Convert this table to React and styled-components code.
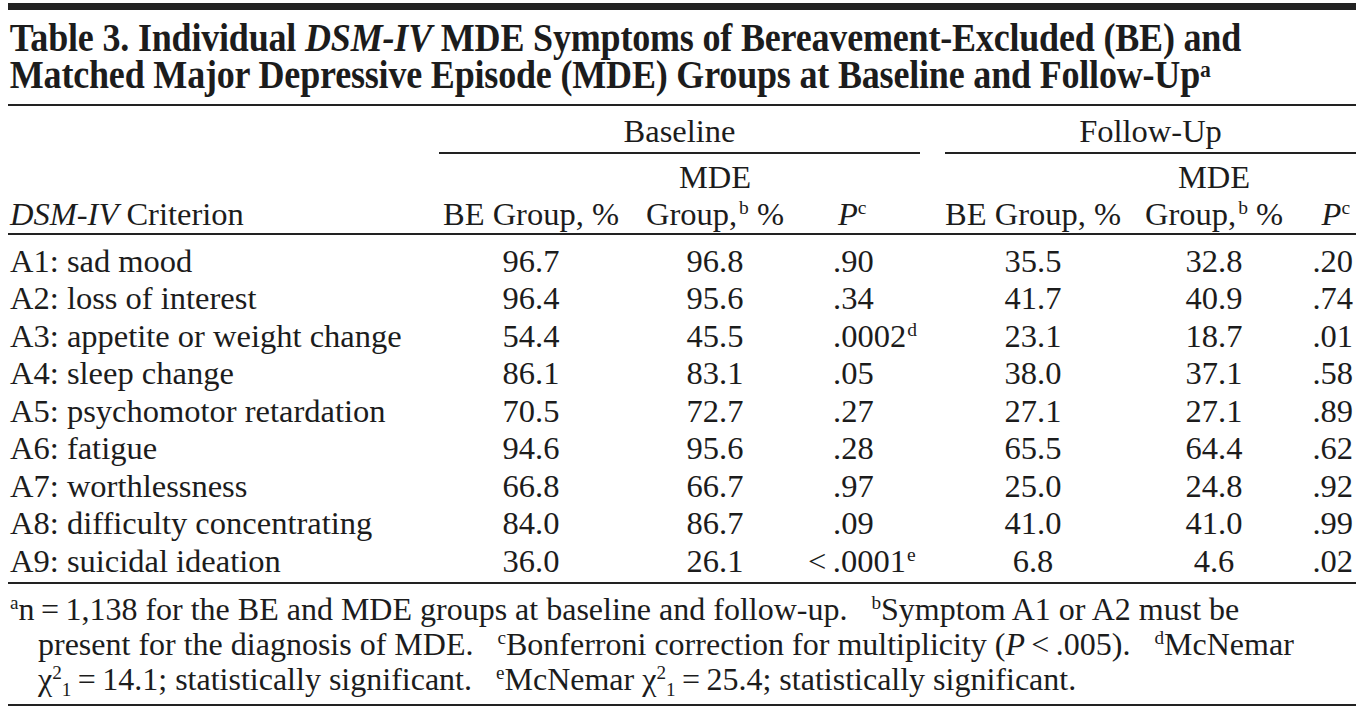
import React from 'react';
import styled, { createGlobalStyle } from 'styled-components';

const SERIF = '"Liberation Serif", "Times New Roman", Times, serif';

const GlobalStyle = createGlobalStyle`
  html, body {
    margin: 0;
    padding: 0;
    background: #ffffff;
  }
  body {
    font-family: ${SERIF};
    color: #1c1c1c;
  }
`;

const Page = styled.div`
  width: 1348px;
  padding: 3px 0 0 8px;
  font-family: ${SERIF};
`;

const TopBar = styled.div`
  height: 7px;
  background: #222;
`;

const Title = styled.h1`
  margin: 0;
  padding: 9px 0 11px 2px;
  font-family: ${SERIF};
  font-size: 40px;
  line-height: 37px;
  font-weight: 700;
  letter-spacing: -0.2px;
  transform: scaleX(0.9);
  transform-origin: left center;
  white-space: nowrap;
  width: 1480px;
`;

const Rule = styled.div`
  height: ${(p) => p.$h || 2}px;
  background: #222;
`;

const Table = styled.table`
  width: 1348px;
  border-collapse: collapse;
  table-layout: fixed;
  font-family: ${SERIF};
  font-size: 32.5px;
  line-height: 37px;
  color: #1c1c1c;
`;

const GroupHead = styled.th`
  font-weight: 400;
  text-align: center;
  padding: 7px 0 2px;
  line-height: 37px;
  border-bottom: ${(p) => (p.$ruled ? '2px solid #222' : 'none')};
`;

const HeadCell = styled.th`
  font-weight: 400;
  text-align: ${(p) => p.$align || 'center'};
  vertical-align: bottom;
  padding: 5px 0 0;
  padding-left: ${(p) => p.$pl || 0}px;
  padding-right: ${(p) => p.$pr || 0}px;
  line-height: 37px;
  border-bottom: 2px solid #222;
  white-space: nowrap;
`;

const Row = styled.tr`
  height: ${(p) => p.$h}px;
`;

const Cell = styled.td`
  text-align: ${(p) => p.$align || 'center'};
  padding-left: ${(p) => p.$pl || 0}px;
  padding-right: ${(p) => p.$pr || 0}px;
  padding-top: ${(p) => p.$pt || 0}px;
  padding-bottom: ${(p) => p.$pb || 0}px;
  line-height: 37px;
  white-space: nowrap;
  vertical-align: middle;
  border-bottom: ${(p) => (p.$last ? '2px solid #222' : 'none')};
`;

const Sup = styled.sup`
  font-size: 0.6em;
  line-height: 0;
  vertical-align: ${(p) => p.$v || '0.55em'};
  margin-left: ${(p) => p.$ml || 0}px;
`;

const Sub = styled.sub`
  font-size: 0.6em;
  line-height: 0;
  vertical-align: -0.3em;
`;

const Less = styled.span`
  margin-left: -25px;
`;

const Notes = styled.div`
  font-family: ${SERIF};
  font-size: 32px;
  line-height: 35px;
  padding: 8px 0 7px 30px;
  text-indent: -28px;
  white-space: nowrap;
`;

const Gap = styled.span`
  display: inline-block;
  width: 24px;
`;

const rows = [
  ['A1: sad mood', '96.7', '96.8', '.90', '35.5', '32.8', '.20'],
  ['A2: loss of interest', '96.4', '95.6', '.34', '41.7', '40.9', '.74'],
  ['A3: appetite or weight change', '54.4', '45.5', ['.0002', 'd'], '23.1', '18.7', '.01'],
  ['A4: sleep change', '86.1', '83.1', '.05', '38.0', '37.1', '.58'],
  ['A5: psychomotor retardation', '70.5', '72.7', '.27', '27.1', '27.1', '.89'],
  ['A6: fatigue', '94.6', '95.6', '.28', '65.5', '64.4', '.62'],
  ['A7: worthlessness', '66.8', '66.7', '.97', '25.0', '24.8', '.92'],
  ['A8: difficulty concentrating', '84.0', '86.7', '.09', '41.0', '41.0', '.99'],
  ['A9: suicidal ideation', '36.0', '26.1', ['.0001', 'e', true], '6.8', '4.6', '.02'],
];

const PValue = ({ v }) => {
  if (Array.isArray(v)) {
    const [num, note, less] = v;
    return (
      <>
        {less && <Less>&lt;&thinsp;</Less>}
        {num}
        <Sup $ml={1}>{note}</Sup>
      </>
    );
  }
  return v;
};

const App = () => {
  return (
    <Page>
      <GlobalStyle />
      <TopBar />
      <Title>
        Table 3. Individual <i>DSM-IV</i> MDE Symptoms of Bereavement-Excluded (BE) and
        <br />
        Matched Major Depressive Episode (MDE) Groups at Baseline and Follow-Up
        <Sup $v="0.45em">a</Sup>
      </Title>
      <Rule />
      <Table>
        <colgroup>
          <col style={{ width: 431 }} />
          <col style={{ width: 184 }} />
          <col style={{ width: 184 }} />
          <col style={{ width: 113 }} />
          <col style={{ width: 25 }} />
          <col style={{ width: 176 }} />
          <col style={{ width: 186 }} />
          <col style={{ width: 49 }} />
        </colgroup>
        <thead>
          <tr>
            <GroupHead />
            <GroupHead colSpan={3} $ruled>
              Baseline
            </GroupHead>
            <GroupHead />
            <GroupHead colSpan={3} $ruled>
              Follow-Up
            </GroupHead>
          </tr>
          <tr>
            <HeadCell $align="left" $pl={2}>
              <i>DSM-IV</i> Criterion
            </HeadCell>
            <HeadCell>BE Group, %</HeadCell>
            <HeadCell>
              MDE
              <br />
              Group,<Sup $ml={2}>b</Sup> %
            </HeadCell>
            <HeadCell $align="left" $pl={31}>
              <i>P</i>
              <Sup>c</Sup>
            </HeadCell>
            <HeadCell />
            <HeadCell>BE Group, %</HeadCell>
            <HeadCell>
              MDE
              <br />
              Group,<Sup $ml={2}>b</Sup> %
            </HeadCell>
            <HeadCell $align="right" $pr={6}>
              <i>P</i>
              <Sup>c</Sup>
            </HeadCell>
          </tr>
        </thead>
        <tbody>
          {rows.map((r, i) => {
            const first = i === 0;
            const last = i === rows.length - 1;
            const h = first ? 46 : last ? 39 : 37.5;
            const pt = first ? 8 : 0;
            const pb = last ? 2 : 0;
            return (
              <Row key={r[0]} $h={h}>
                <Cell $align="left" $pl={2} $pt={pt} $pb={pb} $last={last}>
                  {r[0]}
                </Cell>
                <Cell $pt={pt} $pb={pb} $last={last}>{r[1]}</Cell>
                <Cell $pt={pt} $pb={pb} $last={last}>{r[2]}</Cell>
                <Cell $align="left" $pl={26} $pt={pt} $pb={pb} $last={last}>
                  <PValue v={r[3]} />
                </Cell>
                <Cell $pt={pt} $pb={pb} $last={last} />
                <Cell $pt={pt} $pb={pb} $last={last}>{r[4]}</Cell>
                <Cell $pt={pt} $pb={pb} $last={last}>{r[5]}</Cell>
                <Cell $align="right" $pr={3} $pt={pt} $pb={pb} $last={last}>
                  {r[6]}
                </Cell>
              </Row>
            );
          })}
        </tbody>
      </Table>
      <Notes>
        <Sup>a</Sup>n&thinsp;=&thinsp;1,138 for the BE and MDE groups at baseline and follow-up.
        <Gap />
        <Sup>b</Sup>Symptom A1 or A2 must be
        <br />
        present for the diagnosis of MDE.
        <Gap />
        <Sup>c</Sup>Bonferroni correction for multiplicity (<i>P</i>&thinsp;&lt;&thinsp;.005).
        <Gap />
        <Sup>d</Sup>McNemar
        <br />
        χ<Sup>2</Sup>
        <Sub>1</Sub>&thinsp;=&thinsp;14.1; statistically significant.
        <Gap />
        <Sup>e</Sup>McNemar χ<Sup>2</Sup>
        <Sub>1</Sub>&thinsp;=&thinsp;25.4; statistically significant.
      </Notes>
      <Rule $h={2} />
    </Page>
  );
};

export default App;
